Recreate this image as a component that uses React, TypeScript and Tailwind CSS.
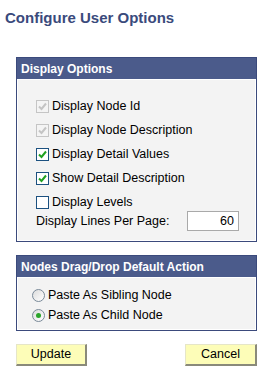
const Check = ({ checked, disabled }: { checked: boolean; disabled?: boolean }) => (
  <span
    className={
      'flex h-[13px] w-[13px] shrink-0 items-center justify-center border ' +
      (disabled ? 'border-[#c5c5c5] bg-[#f4f4f4]' : 'border-[#1c5180] bg-white')
    }
  >
    {checked && (
      <svg width="9" height="9" viewBox="0 0 9 9">
        <path
          d="M1 4.5 L3.5 7 L8 1.5"
          fill="none"
          stroke={disabled ? '#c4c4c4' : '#21a121'}
          strokeWidth="2"
        />
      </svg>
    )}
  </span>
);

const Radio = ({ checked }: { checked: boolean }) => (
  <span className="flex h-[13px] w-[13px] shrink-0 items-center justify-center rounded-full border border-[#7a8a99] bg-gradient-to-br from-[#dcdcdc] to-white">
    {checked && <span className="h-[5px] w-[5px] rounded-full bg-[#2aa52a]" />}
  </span>
);

const Box = ({ title, children }: { title: string; children: React.ReactNode }) => (
  <div className="ml-[16px] w-[241px] border border-[#3b4a7c]">
    <div className="flex h-[21px] items-center bg-[#4b5b8b] pl-[4px] text-[12px] font-bold text-white">{title}</div>
    <div className="border border-white bg-[#f3f3f3]">{children}</div>
  </div>
);

const checks = [
  { label: 'Display Node Id', checked: true, disabled: true },
  { label: 'Display Node Description', checked: true, disabled: true },
  { label: 'Display Detail Values', checked: true },
  { label: 'Show Detail Description', checked: true },
  { label: 'Display Levels', checked: false },
];

export default function App() {
  return (
    <div className="h-[378px] w-[265px] bg-white text-[12.5px] text-black" style={{ fontFamily: '"Liberation Sans", Arial, sans-serif' }}>
      <h1 className="pl-[5px] pt-[9px] text-[15px] font-bold leading-[17px] text-[#3a4a7c]">Configure User Options</h1>
      <div className="mt-[31px]">
        <Box title="Display Options">
          <div className="flex flex-col pl-[18px] pr-[16px] pb-[9px] pt-[15px]">
            {checks.map((c, i) => (
              <label key={c.label} className={'flex h-[22px] items-center gap-[3px] ' + (i > 0 ? 'mt-[2px]' : '')}>
                <Check checked={c.checked} disabled={c.disabled} />
                <span>{c.label}</span>
              </label>
            ))}
            <div className="mt-[-2px] flex h-[20px] items-center justify-between">
              <span>Display Lines Per Page:</span>
              <div className="flex h-[20px] w-[52px] items-center justify-end border border-[#a9a9a9] bg-white pr-[4px]">60</div>
            </div>
          </div>
        </Box>
      </div>
      <div className="mt-[13px]">
        <Box title="Nodes Drag/Drop Default Action">
          <div className="flex flex-col pl-[14px] pt-[7px] pb-[4px]">
            <label className="flex h-[20px] items-center gap-[3px]">
              <Radio checked={false} />
              <span>Paste As Sibling Node</span>
            </label>
            <label className="flex h-[20px] items-center gap-[3px]">
              <Radio checked />
              <span>Paste As Child Node</span>
            </label>
          </div>
        </Box>
      </div>
      <div className="mt-[13px] flex w-[257px] justify-between pl-[16px]">
        <button className="h-[22px] w-[71px] border-b-2 border-l border-r-2 border-t border-b-[#8a8a7a] border-l-[#e6e6c8] border-r-[#8a8a7a] border-t-[#e6e6c8] bg-[#fdfdb8] text-[12.5px]">Update</button>
        <button className="h-[22px] w-[72px] border-b-2 border-l border-r-2 border-t border-b-[#8a8a7a] border-l-[#e6e6c8] border-r-[#8a8a7a] border-t-[#e6e6c8] bg-[#fdfdb8] text-[12.5px]">Cancel</button>
      </div>
    </div>
  );
}
